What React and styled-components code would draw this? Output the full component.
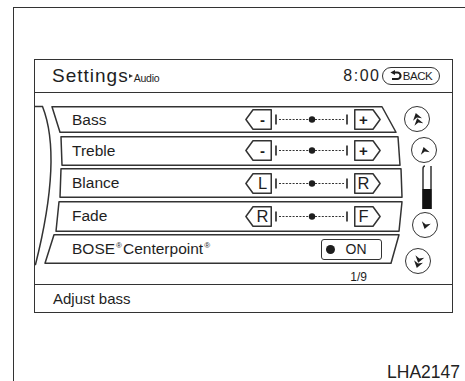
import React from 'react';
import styled, { createGlobalStyle } from 'styled-components';

const GlobalStyle = createGlobalStyle`
  html, body { margin: 0; padding: 0; background: #fff; }
  body { font-family: "Liberation Sans", Arial, sans-serif; color: #1e1e1e; }
`;

const Page = styled.div`
  width: 465px;
  height: 381px;
  padding: 7px 0 0 13px;
  box-sizing: border-box;
  overflow: hidden;
`;

const Frame = styled.div`
  height: 374px;
  border-top: 1.5px solid #333;
  border-left: 1.5px solid #333;
  box-sizing: border-box;
  padding: 50.5px 0 0 19.5px;
`;

const Screen = styled.div`
  width: 419px;
  height: 254px;
  border: 1.5px solid #333;
  box-sizing: border-box;
  display: flex;
  flex-direction: column;
`;

const Header = styled.div`
  height: 33px;
  box-sizing: border-box;
  border-bottom: 1.5px solid #333;
  display: flex;
  align-items: center;
  padding: 0 11.5px 0 17.5px;
`;

const Title = styled.div`
  font-size: 19px;
  letter-spacing: 1px;
  white-space: nowrap;
`;

const Crumb = styled.span`
  display: inline-block;
  width: 0;
  height: 0;
  border-left: 4px solid #333;
  border-top: 2.5px solid transparent;
  border-bottom: 2.5px solid transparent;
  margin: 0 1px 0 0;
  vertical-align: 4px;
`;

const Sub = styled.span`
  font-size: 10.5px;
  letter-spacing: -0.2px;
`;

const Clock = styled.div`
  margin-left: auto;
  font-size: 16px;
  letter-spacing: 1.5px;
`;

const BackButton = styled.div`
  width: 58px;
  height: 18px;
  margin-left: 1.5px;
  box-sizing: border-box;
  border: 1.5px solid #333;
  border-radius: 9px;
  display: flex;
  align-items: center;
  justify-content: center;
  gap: 1px;
  font-size: 11.5px;
  letter-spacing: -0.5px;
`;

const Body = styled.div`
  flex: 1;
  display: flex;
  position: relative;
`;

const SideCurve = styled.svg`
  position: absolute;
  left: 0;
  top: 0;
  overflow: visible;
`;

const List = styled.div`
  width: 361px;
  margin-left: 8.5px;
  padding-top: 13.5px;
  display: flex;
  flex-direction: column;
  gap: 2.5px;
`;

const Row = styled.div`
  position: relative;
  height: ${p => p.$h}px;
  display: flex;
  align-items: center;
  padding: 0 ${p => p.$pr}px 0 29px;
  font-size: 15.5px;
`;

const Outline = styled.svg`
  position: absolute;
  left: 0;
  top: 0;
  overflow: visible;
  z-index: 0;
`;

const Label = styled.span`
  position: relative;
  white-space: nowrap;
`;

const Sup = styled.sup`
  font-size: 8px;
  vertical-align: 6px;
  line-height: 0;
  margin: 0 1px;
`;

const Control = styled.div`
  position: relative;
  margin-left: auto;
  display: flex;
  align-items: center;
`;

const StepButton = styled.span`
  position: relative;
  width: 27px;
  height: 21px;
  box-sizing: border-box;
  padding: ${p => (p.$dir === 'left' ? '0 0 0 8px' : '0 8px 0 0')};
  display: flex;
  align-items: center;
  justify-content: center;
  font-size: ${p => (p.$sign ? '15px' : '16.5px')};
  font-weight: ${p => (p.$sign ? 700 : 400)};
  svg { position: absolute; left: 0; top: 0; }
  b { position: relative; font-weight: inherit; }
`;

const OnButton = styled.div`
  position: relative;
  margin-left: auto;
  width: 61px;
  height: 21px;
  box-sizing: border-box;
  border: 1.5px solid #333;
  border-radius: 3px;
  display: flex;
  align-items: center;
  padding-left: 4px;
  gap: 10.5px;
  font-size: 14px;
`;

const Dot = styled.span`
  width: 9px;
  height: 9px;
  border-radius: 50%;
  background: #1e1e1e;
`;

const PageNum = styled.div`
  margin-top: 4.3px;
  padding-right: 37px;
  text-align: right;
  font-size: 12px;
  line-height: 12px;
`;

const ScrollColumn = styled.div`
  padding-top: 13.5px;
  display: flex;
  flex-direction: column;
  align-items: flex-start;
`;

const Circle = styled.div`
  width: 26px;
  height: 26px;
  box-sizing: border-box;
  border: 1.5px solid #333;
  border-radius: 50%;
  margin: ${p => p.$mt}px 0 0 ${p => p.$x}px;
  display: flex;
  align-items: center;
  justify-content: center;
`;

const Bar = styled.svg`
  margin: ${p => p.$mt}px 0 0 ${p => p.$x}px;
  overflow: visible;
`;

const Footer = styled.div`
  height: 28px;
  box-sizing: border-box;
  border-top: 1.5px solid #333;
  display: flex;
  align-items: center;
  padding-left: 18.5px;
  font-size: 15px;
`;

const Tag = styled.div`
  margin-top: 51.6px;
  padding-right: 5px;
  text-align: right;
  font-size: 17.5px;
  line-height: 17.5px;
  color: #222;
`;

const rows = [
  { name: 'Bass', h: 27, edges: [9, 17, 339, 353], left: '-', right: '+', sign: true },
  { name: 'Treble', h: 30, edges: [18, 19, 355, 357], left: '-', right: '+', sign: true },
  { name: 'Blance', h: 30, edges: [18, 17, 358, 359], left: 'L', right: 'R' },
  { name: 'Fade', h: 31, edges: [16, 13, 359, 356], left: 'R', right: 'F' },
];

function RowShape({ h, edges }) {
  const [lt, lb, rt, rb] = edges;
  const pts = `${lt},0.75 ${rt},0.75 ${rb},${h - 0.75} ${lb},${h - 0.75}`;
  return (
    <Outline width="361" height={h}>
      <polygon points={pts} fill="#fff" stroke="#333" strokeWidth="1.5" strokeLinejoin="round" />
    </Outline>
  );
}

function Step({ dir, sign, children }) {
  const pts = dir === 'left'
    ? '8,0.75 26.25,0.75 26.25,20.25 8,20.25 0.9,10.5'
    : '0.75,0.75 19,0.75 26.1,10.5 19,20.25 0.75,20.25';
  return (
    <StepButton $dir={dir} $sign={sign}>
      <svg width="27" height="21">
        <polygon points={pts} fill="#fff" stroke="#333" strokeWidth="1.5" strokeLinejoin="round" />
      </svg>
      <b>{children}</b>
    </StepButton>
  );
}

function Track() {
  return (
    <svg width="82" height="21">
      <line x1="4" y1="5.5" x2="4" y2="15.5" stroke="#222" strokeWidth="1.6" />
      <line x1="75" y1="5.5" x2="75" y2="15.5" stroke="#222" strokeWidth="1.6" />
      <line x1="7" y1="10.5" x2="37" y2="10.5" stroke="#333" strokeWidth="1" strokeDasharray="2 1.4" />
      <line x1="43" y1="10.5" x2="72" y2="10.5" stroke="#333" strokeWidth="1" strokeDasharray="2 1.4" />
      <circle cx="40" cy="10.5" r="3.2" fill="#1e1e1e" />
    </svg>
  );
}

function ArrowIcon({ up, double }) {
  const head = 'M0 -4 L4.6 2.6 L0 0.6 L-4.6 2.6 Z';
  const rot = up ? -15 : 195;
  return (
    <svg width="23" height="23" viewBox="-11.5 -11.5 23 23">
      <g transform={`rotate(${rot})`} fill="#1e1e1e">
        {double ? (
          <>
            <path d={head} transform="translate(0 -2.6)" />
            <path d={head} transform="translate(0 2.6)" />
          </>
        ) : (
          <path d={head} transform="translate(0 0.5)" />
        )}
      </g>
    </svg>
  );
}

function BackIcon() {
  return (
    <svg width="12" height="11" viewBox="0 0 12 11">
      <path d="M4.5 2.5 H7.3 A3.25 3.25 0 0 1 7.3 9 H2" fill="none" stroke="#1e1e1e" strokeWidth="2.1" />
      <polygon points="0.4,2.5 5,0 5,5" fill="#1e1e1e" />
    </svg>
  );
}

export default function App() {
  return (
    <>
      <GlobalStyle />
      <Page>
        <Frame>
          <Screen>
            <Header>
              <Title>
                Settings<Crumb /><Sub>Audio</Sub>
              </Title>
              <Clock>8:00</Clock>
              <BackButton>
                <BackIcon />
                BACK
              </BackButton>
            </Header>
            <Body>
              <SideCurve width="30" height="190">
                <path d="M-1 13.5 H7.5 Q27.5 64 0.5 171.5 H-1" fill="none" stroke="#333" strokeWidth="1.5" />
              </SideCurve>
              <List>
                {rows.map(r => (
                  <Row key={r.name} $h={r.h} $pr={23}>
                    <RowShape h={r.h} edges={r.edges} />
                    <Label>{r.name}</Label>
                    <Control>
                      <Step dir="left" sign={r.sign}>{r.left}</Step>
                      <Track />
                      <Step dir="right" sign={r.sign}>{r.right}</Step>
                    </Control>
                  </Row>
                ))}
                <Row $h={30} $pr={22}>
                  <RowShape h={30} edges={[11, 2, 356, 348]} />
                  <Label>
                    BOSE<Sup>®</Sup>Centerpoint<Sup>®</Sup>
                  </Label>
                  <OnButton>
                    <Dot />
                    ON
                  </OnButton>
                </Row>
                <PageNum>1/9</PageNum>
              </List>
              <ScrollColumn>
                <Circle $x={0} $mt={0}><ArrowIcon up double /></Circle>
                <Circle $x={7} $mt={5}><ArrowIcon up /></Circle>
                <Bar $x={18} $mt={3} width="10" height="43">
                  <path d="M1 43 V3 Q1 0 3 0 M9 43 V0" fill="none" stroke="#333" strokeWidth="1.5" />
                  <rect x="0.5" y="23" width="9" height="20" fill="#111" />
                </Bar>
                <Circle $x={8} $mt={3}><ArrowIcon /></Circle>
                <Circle $x={1} $mt={10}><ArrowIcon double /></Circle>
              </ScrollColumn>
            </Body>
            <Footer>Adjust bass</Footer>
          </Screen>
          <Tag>LHA2147</Tag>
        </Frame>
      </Page>
    </>
  );
}
